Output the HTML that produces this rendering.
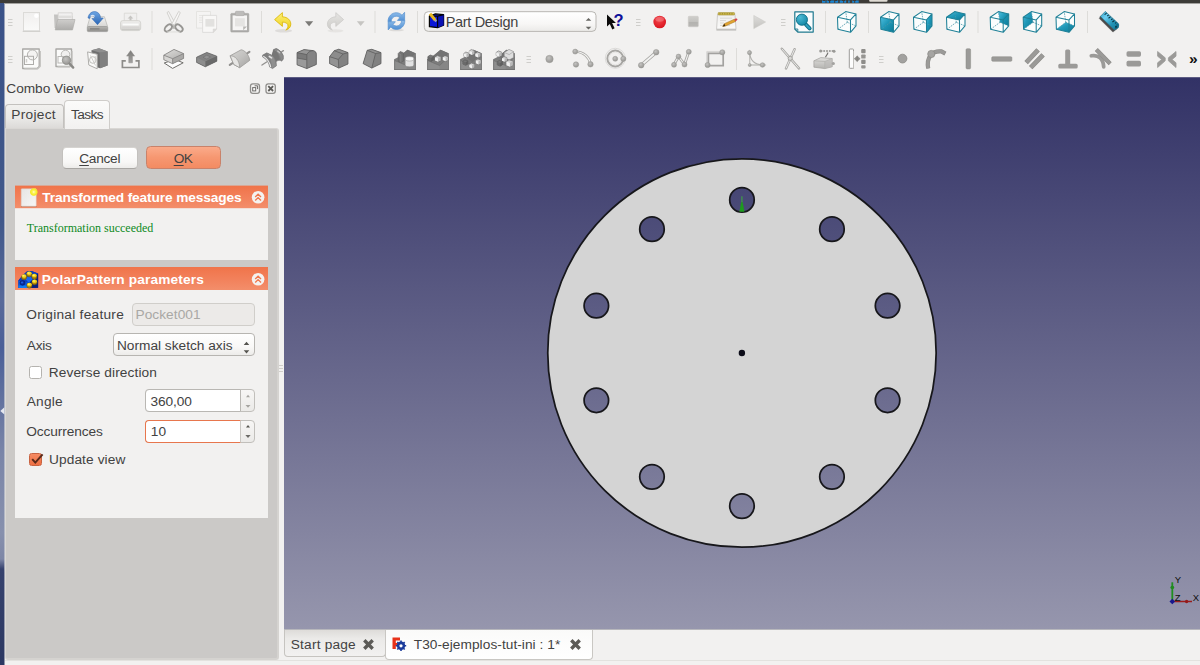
<!DOCTYPE html>
<html lang="en">
<head>
<meta charset="utf-8">
<title>FreeCAD - PolarPattern parameters</title>
<style>
html,body{margin:0;padding:0}
body{width:1200px;height:665px;position:relative;overflow:hidden;background:#f2f1f0;font-family:"Liberation Sans","DejaVu Sans",sans-serif;font-size:13.7px;color:#424242;line-height:16px}
.a{position:absolute}
.t{position:absolute;white-space:pre;line-height:16px;height:16px}
.b{font-weight:bold;color:#fff}
u{text-decoration:underline;text-decoration-thickness:1px;text-underline-offset:1.7px}
#topbar{left:0;top:0;width:1200px;height:3px;background:#3d3c38}
#topbar2{left:0;top:3px;width:1200px;height:1px;background:#a3a29f}
#leftstrip{left:0;top:3px;width:4px;height:662px;background:linear-gradient(#3a5288 0,#41588a 33%,#586a9a 45%,#4a5f98 52%,#62729f 60%,#7a85a8 68%,#8790ad 80%,#7d86a6 84%,#36426e 85.5%,#2c3862 100%)}
#leftstrip2{left:4px;top:4px;width:1px;height:661px;background:linear-gradient(#9aa3ba 0,#a0a8bc 40%,#b3b8c6 75%,#b0b4c2 84%,#9498ab 86%,#9196a8 100%)}
.grip i{position:absolute;left:0;width:5px;height:1px;background:#c9c8c5}
.sep{position:absolute;width:1px;background:#dcdbd8;height:22px}
</style>
</head>
<body>
<div class="a" id="topbar"></div><div class="a" id="topbar2"></div>
<div class="a" id="leftstrip"></div><div class="a" id="leftstrip2"></div>
<svg class="a" style="left:0;top:0" width="1200" height="4" viewBox="0 0 1200 4"><path d="M822 1.600h3.500m1 0h2.500m1.200 0h4m1 0h3m1.500 0h3.500m1 0h2m2 0h1.500m2.500 0h2m1 0h3.500" stroke="#1b86d4" stroke-width="2.400" fill="none"/><path d="M823 .4h2m3 0h3m4 0h2m5 0h3m8 0h3" stroke="#3b3a36" stroke-width="1" fill="none"/><rect x="869.200" y="-1" width="18.300" height="2.700" rx="1" fill="#dfdbd4"/></svg>
<svg class="a" style="left:0;top:405px" width="5" height="12" viewBox="0 0 5 12"><path d="M4.400 2.200v7.400L.3 5.900z" fill="#e4e7ef"/></svg>
<!-- ============ toolbars ============ -->
<svg class="a" style="left:0;top:0" width="1200" height="77" viewBox="0 0 1200 77">
<defs>
<linearGradient id="gPaper" x1="0" y1="0" x2="0" y2="1"><stop offset="0" stop-color="#f0efee"/><stop offset="1" stop-color="#fafaf9"/></linearGradient>
<linearGradient id="gFold" x1="0" y1="0" x2="0" y2="1"><stop offset="0" stop-color="#cfcecc"/><stop offset="1" stop-color="#adacaa"/></linearGradient>
<linearGradient id="gDrvTop" x1="0" y1="0" x2="0" y2="1"><stop offset="0" stop-color="#f4f4f3"/><stop offset="1" stop-color="#d7d6d4"/></linearGradient>
<linearGradient id="gDrvFront" x1="0" y1="0" x2="0" y2="1"><stop offset="0" stop-color="#b7b6b3"/><stop offset="1" stop-color="#8e8d8a"/></linearGradient>
<linearGradient id="gBlue" x1="0" y1="0" x2="0" y2="1"><stop offset="0" stop-color="#6ea6e4"/><stop offset="1" stop-color="#2a65b4"/></linearGradient>
<linearGradient id="gBlue2" x1="0" y1="0" x2="0" y2="1"><stop offset="0" stop-color="#8fbdea"/><stop offset="1" stop-color="#4b8cd2"/></linearGradient>
<linearGradient id="gPrn" x1="0" y1="0" x2="0" y2="1"><stop offset="0" stop-color="#efeeed"/><stop offset="1" stop-color="#d1d0cd"/></linearGradient>
<linearGradient id="gYel" x1="0" y1="0" x2="0" y2="1"><stop offset="0" stop-color="#fdf07a"/><stop offset="1" stop-color="#edcf14"/></linearGradient>
<linearGradient id="gGreyArrow" x1="0" y1="0" x2="0" y2="1"><stop offset="0" stop-color="#e6e5e3"/><stop offset="1" stop-color="#cccbc8"/></linearGradient>
<radialGradient id="gRed" cx=".45" cy=".35" r=".7"><stop offset="0" stop-color="#f4444a"/><stop offset="1" stop-color="#d8121c"/></radialGradient>
<linearGradient id="gStop" x1="0" y1="0" x2="0" y2="1"><stop offset="0" stop-color="#cfcecb"/><stop offset=".5" stop-color="#c3c2bf"/><stop offset=".52" stop-color="#b3b2af"/><stop offset="1" stop-color="#b9b8b5"/></linearGradient>
<linearGradient id="gPlay" x1="0" y1="0" x2="0" y2="1"><stop offset="0" stop-color="#dedddb"/><stop offset="1" stop-color="#c3c2bf"/></linearGradient>
<radialGradient id="gTealBall" cx=".35" cy=".3" r=".8"><stop offset="0" stop-color="#4cb9d4"/><stop offset="1" stop-color="#0f86a4"/></radialGradient>
<linearGradient id="gTeal" x1="0" y1="0" x2="1" y2="1"><stop offset="0" stop-color="#4fbfe0"/><stop offset=".45" stop-color="#1f98b8"/><stop offset="1" stop-color="#0c7a97"/></linearGradient>
<linearGradient id="gRuler" x1="0" y1="0" x2="1" y2="1"><stop offset="0" stop-color="#2a9cc0"/><stop offset=".3" stop-color="#6ccdf0"/><stop offset=".65" stop-color="#2294b6"/><stop offset="1" stop-color="#137a98"/></linearGradient>
<radialGradient id="gBall" cx=".4" cy=".35" r=".75"><stop offset="0" stop-color="#c4c3c1"/><stop offset="1" stop-color="#8f8e8b"/></radialGradient>
<linearGradient id="gArrowUp" x1="0" y1="0" x2="0" y2="1"><stop offset="0" stop-color="#7b7a77"/><stop offset="1" stop-color="#a3a2a0"/></linearGradient>
<linearGradient id="gPadTop" x1="0" y1="0" x2="1" y2="1"><stop offset="0" stop-color="#dddcda"/><stop offset="1" stop-color="#b2b1af"/></linearGradient>
<linearGradient id="gCyl" x1="0" y1="0" x2="1" y2="1"><stop offset="0" stop-color="#d6d5d3"/><stop offset=".5" stop-color="#c2c1bf"/><stop offset="1" stop-color="#a3a2a0"/></linearGradient>
<linearGradient id="gBox" x1="0" y1="0" x2="0" y2="1"><stop offset="0" stop-color="#e0dfdd"/><stop offset="1" stop-color="#b5b4b1"/></linearGradient>
<linearGradient id="gCombo" x1="0" y1="0" x2="0" y2="1"><stop offset="0" stop-color="#ffffff"/><stop offset=".6" stop-color="#f8f7f6"/><stop offset="1" stop-color="#ebeae8"/></linearGradient>
</defs>
<rect x="424.3" y="11.7" width="171.7" height="19.7" rx="4" fill="url(#gCombo)" stroke="#b9b7b3" stroke-width="1"/>
<g transform="translate(429 13.5)"><path d="M.4 2.6L6.5.4l8.1.8v10.6l-6 2.4-8.2-1z" fill="#0a16d8" stroke="#050505" stroke-width="1.2" stroke-linejoin="round"/><path d="M8.6 2.6l6-1.4v10.6l-6 2.4z" fill="#0b12b4"/><path d="M.4 2.6h8.2l6-1.4M8.6 2.6v11.6" fill="none" stroke="#050505" stroke-width="1.1"/><path d="M1 .2l5.3 6.6" stroke="#e6b61e" stroke-width="3" stroke-linecap="butt"/><path d="M6 6.3l1.3 1.7" stroke="#9aa0b4" stroke-width="2.2"/></g>
<path d="M585.7 20.8l2.8-2.7 2.8 2.7zM585.7 26.8l2.8 2.7 2.8-2.7z" fill="#666561"/>
<path d="M8 19.5h4.5M8 22.5h4.5M8 25.5h4.5" stroke="#cfcecb" stroke-width="1" fill="none"/>
<g transform="translate(23 12)"><rect x=".5" y=".5" width="16" height="18.3" fill="url(#gPaper)" stroke="#dcdbd8"/><circle cx="13.4" cy="3.8" r="2.3" fill="#fff" opacity=".95"/><path d="M-.3 19.4h17.6" stroke="#cfcecb" stroke-width="1"/></g>
<g transform="translate(53 12)"><path d="M1 2.6h4.6l1 1.4h12.9v12H1.6z" fill="#c4c3c1"/><path d="M5.2.8h14v13h-14z" fill="url(#gPaper)" stroke="#d2d1ce" stroke-width=".8"/><path d="M6 3.6h12.6v2.7H6z" fill="#dfdedc"/><path d="M2.2 17.9L4.7 7.5h17.3l-2.5 10.4z" fill="url(#gFold)" stroke="#b0afac" stroke-width=".7"/></g>
<g transform="translate(87 12)"><path d="M3.2 4.7h14.2l3.2 9.9H.3z" fill="url(#gDrvTop)" stroke="#bdbcb9" stroke-width=".8"/><rect x=".3" y="14.5" width="20.4" height="5.1" rx="1.2" fill="url(#gDrvFront)" stroke="#9a9996" stroke-width=".7"/><path d="M3 16.9h9.5" stroke="#7e7d7a" stroke-width="1.2"/><path d="M1 6C1.5 2.5 4-.4 7.3-.4c3.7 0 5.9 2.6 6.3 6.3l2.7.1-5.8 6.7-5.6-6.2 2.7-.1C7.4 4.6 6.6 3.6 5.4 3.6 4 3.6 3 4.8 2.8 6.4z" fill="url(#gBlue)" stroke="#3a6fb4" stroke-width=".6" stroke-linejoin="round"/><path d="M3.6 4.3c1.2-1.3 3-1.2 4 .2" fill="none" stroke="#fff" stroke-width="1.1" opacity=".75"/></g>
<g transform="translate(120 13)"><path d="M4.3.2h12.4v9h-12.4z" fill="#f0efee" stroke="#d8d7d4" stroke-width=".8"/><path d="M10.5 2.4l2.8 3h-1.8v3h-2V5.4H7.7z" fill="#c6c5c2"/><rect x=".5" y="7.6" width="20.2" height="10" rx="2.4" fill="url(#gPrn)" stroke="#d0cfcc" stroke-width=".8"/><path d="M2.5 11.5h16.2" stroke="#fbfbfa" stroke-width="2"/><path d="M2.2 14.3h16.8" stroke="#d6d5d2" stroke-width=".9"/><path d="M2 16.6h17.2" stroke="#c9c8c5" stroke-width="1"/></g>
<path d="M152 11v22" stroke="#dddcd9" stroke-width="1" fill="none"/>
<g transform="translate(164 11)"><path d="M4.6.4l6.8 12.4-2.6 1.4L3 1.6z" fill="#f4f3f2" stroke="#cbcac7" stroke-width=".8"/><path d="M14.7.4L7.9 12.8l2.6 1.4L16.3 1.6z" fill="#f7f6f5" stroke="#cbcac7" stroke-width=".8"/><ellipse cx="4.3" cy="17" rx="2.6" ry="4.3" transform="rotate(48 4.3 17)" fill="none" stroke="#979693" stroke-width="1.9"/><ellipse cx="15" cy="17" rx="2.6" ry="4.3" transform="rotate(-48 15 17)" fill="none" stroke="#979693" stroke-width="1.9"/><path d="M9.7 13.2l-1.5 4.5h3z" fill="#b5b4b1"/><ellipse cx="9.6" cy="20.9" rx="7" ry=".8" fill="#e0dfdd" opacity=".7"/></g>
<g transform="translate(196 11)"><path d="M.5.5h14v16.6H.5z" fill="#f5f4f3" stroke="#e1e0dd" stroke-width=".8"/><path d="M3 4.5h4M3 6.8h4M3 9.1h4M3 11.4h4" stroke="#e6e5e3" stroke-width="1"/><path d="M6.6 4.4h14v13.6l-3.4 3.4H6.6z" fill="#f8f7f6" stroke="#d9d8d5" stroke-width=".8"/><path d="M9.4 8h9v7.6h-9z" fill="#e2e1df"/><path d="M17.2 21.4v-3.4h3.4z" fill="#dddcda" stroke="#d2d1ce" stroke-width=".5"/></g>
<g transform="translate(230 11)"><rect x=".8" y="2.4" width="18" height="18.6" rx=".8" fill="#adacaa" stroke="#a3a2a0" stroke-width=".6"/><path d="M2.6 4.4h14.4v14.8H2.6z" fill="#f6f5f4"/><rect x="5.4" y=".3" width="8.8" height="4.3" rx="1" fill="#bdbcba" stroke="#a9a8a6" stroke-width=".6"/><path d="M5 7.2h9.8v8.2H5z" fill="#e5e4e2"/><path d="M13.2 19.2v-3.8h3.8z" fill="#b9b8b5"/></g>
<path d="M261.5 11v22" stroke="#dddcd9" stroke-width="1" fill="none"/>
<g transform="translate(274 12)"><ellipse cx="9.5" cy="18.8" rx="8.5" ry="1.7" fill="#d8d7d4" opacity=".8"/><path d="M.6 7.6L8.4.6v4.2c5.4.300 8.4 3.6 8.4 7.4 0 3-2.2 5.2-5 5.8 1.6-1.2 2.2-2.6 2.2-4 0-2.4-2-3.8-5.6-3.9v4.3z" fill="url(#gYel)" stroke="#d9b400" stroke-width=".8" stroke-linejoin="round"/></g>
<path d="M305 21.2h8.2l-4.1 5z" fill="#7b7a77"/>
<g transform="translate(327 12)"><ellipse cx="8.5" cy="18.8" rx="8" ry="1.6" fill="#e2e1de" opacity=".8"/><path d="M16.6 7.6L8.8.6v4.2C3.4 5.1.4 8.4.4 12.2c0 3 2.2 5.2 5 5.8-1.6-1.2-2.2-2.6-2.2-4 0-2.4 2-3.8 5.6-3.9v4.3z" fill="url(#gGreyArrow)" stroke="#cdccc9" stroke-width=".8" stroke-linejoin="round"/></g>
<path d="M356.8 21.2h7.8l-3.9 4.8z" fill="#c6c5c2"/>
<path d="M375 11v22" stroke="#dddcd9" stroke-width="1" fill="none"/>
<g transform="translate(387 11.5)"><ellipse cx="9.5" cy="18.6" rx="7.5" ry="1.2" fill="#d6d5d2" opacity=".8"/><g transform="translate(0 -.3) scale(1 1.1)"><path d="M1 9.6C1 4.6 4.8 1.4 9.2 1.4c2.4 0 4.3.8 5.8 2.3L17.6 1v7.4h-7.2l2.4-2.5C11.8 5 10.6 4.6 9.2 4.6 6.4 4.6 4.2 6.6 4.2 9.6z" fill="url(#gBlue2)" stroke="#5a93d0" stroke-width=".7" stroke-linejoin="round"/><path d="M17.8 8.4c0 5-3.8 8.2-8.2 8.2-2.4 0-4.3-.8-5.8-2.3L1.2 17V9.6h7.2L6 12.1c1 .9 2.2 1.3 3.6 1.3 2.8 0 5-2 5-5z" fill="url(#gBlue2)" stroke="#5a93d0" stroke-width=".7" stroke-linejoin="round"/></g></g>
<path d="M417.5 11v22" stroke="#dddcd9" stroke-width="1" fill="none"/>
<g transform="translate(606 14)"><path d="M1 .4l0 12.2 2.8-2.6 2.5 5.4 2.3-1.1-2.5-5.2 3.9-.2z" fill="#0b0b0b"/><text x="7.6" y="12.3" font-family="'Liberation Sans',sans-serif" font-weight="bold" font-size="16.5" fill="#10109a">?</text></g>
<path d="M636 19.5h4.5M636 22.5h4.5M636 25.5h4.5" stroke="#cfcecb" stroke-width="1" fill="none"/>
<g transform="translate(653 15.5)"><circle cx="6.7" cy="6.5" r="6.3" fill="url(#gRed)"/><ellipse cx="6.7" cy="3.8" rx="4.3" ry="2.5" fill="#fff" opacity=".22"/></g>
<g transform="translate(688 16)"><rect x=".3" y=".3" width="10" height="10.4" rx=".8" fill="url(#gStop)" stroke="#c9c8c5" stroke-width=".6"/></g>
<g transform="translate(716 12)"><path d="M1.5 2.5h17.5l1 14.6H.6z" fill="url(#gPaper)" stroke="#c4c3c0" stroke-width=".8"/><path d="M.4 17.1h19.8v1.5H.4z" fill="#bfbebb"/><rect x="2" y=".5" width="16.6" height="2.6" rx=".8" fill="#c9b64a" stroke="#a08c2c" stroke-width=".5"/><path d="M3.5 1.8h13.5" stroke="#8f7c25" stroke-width="1" stroke-dasharray="1 1.4"/><path d="M4 6.2h12M4 8.6h6M4 11h4M4 13.4h10" stroke="#d9d8d5" stroke-width="1"/><path d="M8.3 11.7L18.4 7.2l1.1 2.3-10.1 4.6-2.7.4z" fill="#e2a431" stroke="#9b6b14" stroke-width=".5"/><path d="M18.4 7.2l1.3-.6c.8-.3 1.7.3 1.8 1.1l-2 1.8z" fill="#d8424a"/><path d="M6.7 14.5l1.6-2.8 1.1 2.4z" fill="#3a2a12"/></g>
<g transform="translate(753 15)"><path d="M.8.5L12.6 7 .8 13.6z" fill="url(#gPlay)" stroke="#cccbc8" stroke-width=".6"/></g>
<path d="M781 19.5h4.5M781 22.5h4.5M781 25.5h4.5" stroke="#cfcecb" stroke-width="1" fill="none"/>
<g transform="translate(794 11)"><path d="M.8.8h18.4v20.3H3.8L.8 18z" fill="#f9fcfd" stroke="#207a8f" stroke-width="1.2" stroke-linejoin="round"/><path d="M.8 18h3v3" fill="none" stroke="#207a8f" stroke-width=".9"/><path d="M12 13.7l3.6 3.6" stroke="#0f6f88" stroke-width="4" stroke-linecap="round"/><path d="M12.2 13.9l3.3 3.3" stroke="#2fa3c0" stroke-width="2" stroke-linecap="round"/><circle cx="7.9" cy="8.7" r="5.6" fill="url(#gTealBall)" stroke="#0f6f88" stroke-width=".9"/></g>
<path d="M825.5 11v22" stroke="#dddcd9" stroke-width="1" fill="none"/>
<g transform="translate(837 11)"><path d="M0.5 6.3L8.7 0.6L19 2.9L19 14.9L13.5 21.3L0.9 18.3Z" fill="#fbfdfd"/><path d="M10.3 11.3L8.7 0.6M10.3 11.3L19 14.9M10.3 11.3L0.9 18.3" stroke="#4a98aa" stroke-width=".8" stroke-dasharray="1.6 .9" fill="none"/><path d="M0.5 6.3L13.5 8.9L13.5 21.3L0.9 18.3ZM0.5 6.3L8.7 0.6L19 2.9L13.5 8.9ZM13.5 8.9L19 2.9L19 14.9L13.5 21.3Z" fill="none" stroke="#1f8097" stroke-width="1.05" stroke-linejoin="round"/></g>
<path d="M868.5 11v22" stroke="#dddcd9" stroke-width="1" fill="none"/>
<g transform="translate(880 11)"><path d="M0.5 6.3L8.7 0.6L19 2.9L19 14.9L13.5 21.3L0.9 18.3Z" fill="#fbfdfd"/><path d="M0.5 6.3L13.5 8.9L13.5 21.3L0.9 18.3Z" fill="url(#gTeal)"/><path d="M10.3 11.3L8.7 0.6M10.3 11.3L19 14.9M10.3 11.3L0.9 18.3" stroke="#4a98aa" stroke-width=".8" stroke-dasharray="1.6 .9" fill="none"/><path d="M0.5 6.3L13.5 8.9L13.5 21.3L0.9 18.3ZM0.5 6.3L8.7 0.6L19 2.9L13.5 8.9ZM13.5 8.9L19 2.9L19 14.9L13.5 21.3Z" fill="none" stroke="#1f8097" stroke-width="1.05" stroke-linejoin="round"/></g>
<g transform="translate(913 11)"><path d="M0.5 6.3L8.7 0.6L19 2.9L19 14.9L13.5 21.3L0.9 18.3Z" fill="#fbfdfd"/><path d="M13.5 8.9L19 2.9L19 14.9L13.5 21.3Z" fill="url(#gTeal)"/><path d="M10.3 11.3L8.7 0.6M10.3 11.3L19 14.9M10.3 11.3L0.9 18.3" stroke="#4a98aa" stroke-width=".8" stroke-dasharray="1.6 .9" fill="none"/><path d="M0.5 6.3L13.5 8.9L13.5 21.3L0.9 18.3ZM0.5 6.3L8.7 0.6L19 2.9L13.5 8.9ZM13.5 8.9L19 2.9L19 14.9L13.5 21.3Z" fill="none" stroke="#1f8097" stroke-width="1.05" stroke-linejoin="round"/></g>
<g transform="translate(946 11)"><path d="M0.5 6.3L8.7 0.6L19 2.9L19 14.9L13.5 21.3L0.9 18.3Z" fill="#fbfdfd"/><path d="M0.5 6.3L8.7 0.6L19 2.9L13.5 8.9Z" fill="url(#gTeal)"/><path d="M10.3 11.3L8.7 0.6M10.3 11.3L19 14.9M10.3 11.3L0.9 18.3" stroke="#4a98aa" stroke-width=".8" stroke-dasharray="1.6 .9" fill="none"/><path d="M0.5 6.3L13.5 8.9L13.5 21.3L0.9 18.3ZM0.5 6.3L8.7 0.6L19 2.9L13.5 8.9ZM13.5 8.9L19 2.9L19 14.9L13.5 21.3Z" fill="none" stroke="#1f8097" stroke-width="1.05" stroke-linejoin="round"/></g>
<path d="M978 11v22" stroke="#dddcd9" stroke-width="1" fill="none"/>
<g transform="translate(989.7 11)"><path d="M0.5 6.3L8.7 0.6L19 2.9L19 14.9L13.5 21.3L0.9 18.3Z" fill="#fbfdfd"/><path d="M8.7 0.6L19 2.9L19 14.9L10.3 11.3Z" fill="url(#gTeal)"/><path d="M10.3 11.3L8.7 0.6M10.3 11.3L19 14.9M10.3 11.3L0.9 18.3" stroke="#4a98aa" stroke-width=".8" stroke-dasharray="1.6 .9" fill="none"/><path d="M0.5 6.3L13.5 8.9L13.5 21.3L0.9 18.3ZM0.5 6.3L8.7 0.6L19 2.9L13.5 8.9ZM13.5 8.9L19 2.9L19 14.9L13.5 21.3Z" fill="none" stroke="#1f8097" stroke-width="1.05" stroke-linejoin="round"/></g>
<g transform="translate(1022.7 11)"><path d="M0.5 6.3L8.7 0.6L19 2.9L19 14.9L13.5 21.3L0.9 18.3Z" fill="#fbfdfd"/><path d="M0.5 6.3L8.7 0.6L10.3 11.3L0.9 18.3Z" fill="url(#gTeal)"/><path d="M10.3 11.3L8.7 0.6M10.3 11.3L19 14.9M10.3 11.3L0.9 18.3" stroke="#4a98aa" stroke-width=".8" stroke-dasharray="1.6 .9" fill="none"/><path d="M0.5 6.3L13.5 8.9L13.5 21.3L0.9 18.3ZM0.5 6.3L8.7 0.6L19 2.9L13.5 8.9ZM13.5 8.9L19 2.9L19 14.9L13.5 21.3Z" fill="none" stroke="#1f8097" stroke-width="1.05" stroke-linejoin="round"/></g>
<g transform="translate(1055.5 11)"><path d="M0.5 6.3L8.7 0.6L19 2.9L19 14.9L13.5 21.3L0.9 18.3Z" fill="#fbfdfd"/><path d="M0.9 18.3L13.5 21.3L19 14.9L10.3 11.3Z" fill="url(#gTeal)"/><path d="M10.3 11.3L8.7 0.6M10.3 11.3L19 14.9M10.3 11.3L0.9 18.3" stroke="#4a98aa" stroke-width=".8" stroke-dasharray="1.6 .9" fill="none"/><path d="M0.5 6.3L13.5 8.9L13.5 21.3L0.9 18.3ZM0.5 6.3L8.7 0.6L19 2.9L13.5 8.9ZM13.5 8.9L19 2.9L19 14.9L13.5 21.3Z" fill="none" stroke="#1f8097" stroke-width="1.05" stroke-linejoin="round"/></g>
<path d="M1087.5 11v22" stroke="#dddcd9" stroke-width="1" fill="none"/>
<g transform="translate(1098 12)"><path d="M1.3 6.5l1.1-2.3 14 13.5 3-1.3-4.5 3.7z" fill="#4b4b4b" stroke="#5a5a5a" stroke-width=".5" stroke-linejoin="round"/><path d="M7.3-.6L20 11.2c.9.9.9 2.2.2 4.6l-3.9 2L2.4 4.4z" fill="url(#gRuler)" stroke="#12647e" stroke-width=".6" stroke-linejoin="round"/><path d="M16.3 17.8l1.5-5 2.2-1.6c.9.9.9 2.2.2 4.6z" fill="#0f6d8a"/><path d="M8.6 1.1l-2 1.5M10.6 3l-1.3 1M12.5 4.8l-2 1.5M14.5 6.7l-1.3 1M16.4 8.5l-2 1.5M18.4 10.4l-1.3 1" stroke="#0a3444" stroke-width="1.1"/><circle cx="18" cy="14.8" r=".9" fill="#083040"/></g>
<path d="M8 56.5h4.5M8 59.5h4.5M8 62.5h4.5" stroke="#cfcecb" stroke-width="1" fill="none"/>
<g transform="translate(21.2 48)"><path d="M1.5 1h16.5v17.5l-2 2H1.5z" fill="#fbfbfa" stroke="#a9a8a5" stroke-width="1.3" stroke-linejoin="round"/><path d="M3 20.9h13.5l2.7-2.7V3" fill="none" stroke="#c7c6c3" stroke-width="1.2"/><circle cx="11.2" cy="6.9" r="5" fill="#f4f3f2" stroke="#b3b2af" stroke-width="1"/><rect x="3.3" y="8.3" width="9" height="8.2" fill="none" stroke="#aeadaa" stroke-width="1"/><path d="M5.3 11v3.5" stroke="#d0cfcc" stroke-width="1.5"/></g>
<g transform="translate(55 48)"><path d="M1 1h15.5v15.5l-2 2H1z" fill="#fbfbfa" stroke="#a9a8a5" stroke-width="1.4" stroke-linejoin="round"/><path d="M2.5 18.8h12.2l2.4-2.4V3" fill="none" stroke="#c7c6c3" stroke-width="1.2"/><circle cx="10.5" cy="6.5" r="4.3" fill="#f1f0ef" stroke="#b9b8b5" stroke-width="1"/><rect x="3" y="8.5" width="6" height="6.5" fill="none" stroke="#b9b8b5" stroke-width="1"/><circle cx="11.5" cy="12.3" r="4.2" fill="url(#gBall)" stroke="#8c8b88" stroke-width=".8"/><path d="M14.6 15.6l3.6 4" stroke="#8a8986" stroke-width="2.4" stroke-linecap="round"/></g>
<g transform="translate(87 48)"><path d="M4.5 2.2l7.5-2 8.6 3.2v14l-7.6 2.8-8.5-2.6z" fill="#6f6f6f"/><path d="M12.5 4.3l8.1-.9v14l-7.6 2.8z" fill="#808080"/><path d="M4.5 2.2l7.5-2 8.6 3.2-8.1 1z" fill="#8f8f8f"/><path d="M.6 3.9l9.6 2.4v14.5L1.8 17z" fill="#fafaf9" stroke="#aeadaa" stroke-width="1" stroke-linejoin="round"/><circle cx="5.8" cy="12" r="3.3" fill="none" stroke="#bfbeba" stroke-width="1"/><path d="M3.5 7.5l5 10M8.2 8v6" stroke="#cfcecb" stroke-width="1"/></g>
<g transform="translate(121 51)"><path d="M4.8 9.8H1.4v6.7h16.5V9.8h-3.4" fill="none" stroke="#8d8c89" stroke-width="1.7"/><path d="M9.6-.4l4 5.5h-2.2v6.7H7.8V5.1H5.6z" fill="url(#gArrowUp)" stroke="#8a8986" stroke-width=".5"/></g>
<path d="M152 48v22" stroke="#dddcd9" stroke-width="1" fill="none"/>
<g transform="translate(163 49)"><path d="M1.2 14l10.6-3.6 8.4 3.4-10.6 5.6z" fill="#fdfdfd" stroke="#6f6e6b" stroke-width="1" stroke-linejoin="round"/><path d="M.8 6.2L11 .4l9.6 4.2v4.8L9.6 14.7.8 10.7z" fill="#b5b4b2"/><path d="M.8 6.2L11 .4l9.6 4.2L9.6 9.7z" fill="url(#gPadTop)"/><path d="M.8 6.2l8.8 3.5v5L.8 10.7z" fill="#d6d5d3"/><path d="M9.6 9.7l11-5.1v4.8l-11 5.3z" fill="#aaa9a7"/><path d="M.8 6.2L11 .4l9.6 4.2v4.8L9.6 14.7.8 10.7zM.8 6.2l8.8 3.5 11-5.1M9.6 9.7v5" fill="none" stroke="#838280" stroke-width=".8" stroke-linejoin="round"/></g>
<g transform="translate(196 52)"><path d="M.6 5.2L10.8.4l10 3.8v5L9.3 14.8.6 10.4z" fill="#777"/><path d="M.6 5.2L10.8.4l10 3.8L9.3 9.6z" fill="#838383"/><path d="M9.3 9.6l11.5-5.4v5L9.3 14.8z" fill="#6a6a6a"/><path d="M.6 5.2l8.7 4.4v5.2L.6 10.4z" fill="#8d8d8d"/><path d="M7 5.3l3.6-2 3.8 1.6-3.6 2.1z" fill="#939393" stroke="#6c6c6c" stroke-width=".5"/><path d="M.6 5.2L10.8.4l10 3.8v5L9.3 14.8.6 10.4z" fill="none" stroke="#636363" stroke-width=".7" stroke-linejoin="round"/></g>
<g transform="translate(229 50)"><path d="M.8 14.8L20.4 1.9" stroke="#939290" stroke-width="2.2" stroke-linecap="round"/><path d="M1.1 5.8L12.1-.2c3.5.4 7.6 4.5 8.7 10.5L10.7 17.7 4.8 14.5z" fill="url(#gCyl)" stroke="#9c9b98" stroke-width=".8" stroke-linejoin="round"/><path d="M1.1 5.8c4.9-.3 9.4 4.2 9.6 11.9L4.8 14.5z" fill="#e6e5e3" stroke="#9c9b98" stroke-width=".8" stroke-linejoin="round"/></g>
<g transform="translate(262 48.8)"><path d="M0 16.2L4.6 13.2M19.6 3L21.4 1.9" stroke="#939290" stroke-width="1.4" stroke-linecap="round"/><path d="M.6 6.3L4.8 4l5.1 2.5c.6-2 1.1-4 1.7-5.9l2.5-.8c2.9.7 5.9 3.7 7.2 7.1v3.4l-1.7 2.1c-1.6-1.4-3.6-.9-5.5.4l.4 4.2-3.9 2.8-2.9-1.5C7 14 4.5 10 .6 8.2z" fill="#7f7f7f"/><path d="M4.8 4l5.1 2.5c2.3 2.6 3.6 6 4.2 10.5l-3.8 2.8C9.8 13.5 8 8 4.8 4z" fill="#8f8f8f"/><path d="M9.9 6.5c.6-2 1.1-4 1.7-5.9 3.3 1.9 5.3 5.4 6 9.8-1.4.3-2.4 1.1-3.5 2.4-.7-2.6-2-4.6-4.2-6.3z" fill="#767676"/><path d="M11.6.6l2.5-.8c2.9.7 5.9 3.7 7.2 7.1v3.4l-1.7 2.1C18.6 7 15.8 2.8 11.6.6z" fill="#8a8a8a"/><path d="M1.3 7.5c3.7 2 6.3 6 7.4 11.2" fill="none" stroke="#ededed" stroke-width="1.3"/><path d="M7.3 7.7l2.3 1.4" stroke="#e2e2e2" stroke-width="1.6" stroke-linecap="round"/><path d="M15.6 2.2l2.2 1.9" stroke="#c9c9c9" stroke-width="1.1" stroke-linecap="round"/><path d="M.6 6.3L4.8 4l5.1 2.5c.6-2 1.1-4 1.7-5.9l2.5-.8c2.9.7 5.9 3.7 7.2 7.1v3.4l-1.7 2.1c-1.6-1.4-3.6-.9-5.5.4l.4 4.2-3.9 2.8-2.9-1.5C7 14 4.5 10 .6 8.2z" fill="none" stroke="#6c6c6c" stroke-width=".5"/></g>
<g transform="translate(296 49)"><path d="M1 3.6L8 .6 17 1.6c2.2.4 3.3 1.8 3.3 3.6v10.3L10.8 19.6 1 15.8z" fill="#7e7e7e"/><path d="M1 3.6L8 .6l9 1c-3.4.4-5.2 1.8-6.2 4z" fill="#959595"/><path d="M10.8 5.6c1-2.2 2.8-3.6 6.2-4 2.2.4 3.3 1.8 3.3 3.6v10.3l-9.5 4.1z" fill="#838383"/><path d="M1 3.6l9.8 2v5.2L1 9z" fill="#7a7a7a"/><path d="M1 9l9.8 1.8v8.8L1 15.8z" fill="#9a9a9a"/><path d="M1 9l9.8 1.8" fill="none" stroke="#606060" stroke-width=".8"/><path d="M1 3.6L8 .6 17 1.6c2.2.4 3.3 1.8 3.3 3.6v10.3L10.8 19.6 1 15.8zM1 3.6l9.8 2v14M10.8 5.6c1-2.2 2.8-3.6 6.2-4" fill="none" stroke="#5f5f5f" stroke-width=".8" stroke-linejoin="round"/></g>
<g transform="translate(329 49)"><path d="M5.2 1.7L9.8.2 19 3.6V15l-9.2 4.1L.6 14.6V7.7z" fill="#7e7e7e"/><path d="M5.2 1.7L9.8.2 19 3.6l-5 1.4z" fill="#8f8f8f"/><path d="M.6 7.7l4.6-6L14 5l-4.7 5.4z" fill="#8c8c8c"/><path d="M.6 7.7l8.7 2.7.5 8.7-9.2-4.5z" fill="#939393"/><path d="M9.3 10.4L14 5l5-1.4V15l-9.2 4.1z" fill="#828282"/><path d="M5.2 1.7L9.8.2 19 3.6V15l-9.2 4.1L.6 14.6V7.7zM.6 7.7l8.7 2.7.5 8.7M9.3 10.4L14 5l5-1.4M5.2 1.7L14 5" fill="none" stroke="#5f5f5f" stroke-width=".8" stroke-linejoin="round"/></g>
<g transform="translate(362 49)"><path d="M5.2 1.3L9.8.3 19 3.6v11l-9.2 4.5-8.7-4.5z" fill="#7e7e7e"/><path d="M5.2 1.3L9.8.3 19 3.6l-5.5.9z" fill="#909090"/><path d="M5.2 1.3l8.3 3.2-3.7 14.6-8.7-4.5z" fill="#8e8e8e"/><path d="M13.5 4.5l5.5-.9v11l-9.2 4.5z" fill="#818181"/><path d="M5.2 1.3L9.8.3 19 3.6v11l-9.2 4.5-8.7-4.5zM5.2 1.3l8.3 3.2-3.7 14.6M13.5 4.5l5.5-.9" fill="none" stroke="#5f5f5f" stroke-width=".8" stroke-linejoin="round"/></g>
<g transform="translate(394 49)"><path d="M.6 10L5.5 7.5 13.5.8l8 3.5V21H.6z" fill="#7c7c7c"/><path d="M5.5 7.5L13.5.8l8 3.5-9 9z" fill="#737373"/><path d="M.6 11.5l12 5 8.9-8.5V21H.6z" fill="#868686"/><path d="M.6 11.5l12 5V21H.6z" fill="#8e8e8e"/><path d="M.6 11.5l12 5 8.9-8.5M.6 20.5h21M.6 10v11M21.5 4.3V21" fill="none" stroke="#6d6d6d" stroke-width=".7"/><path d="M4.2 4.5l2-2 3.2 1.2v8.5l-2.8 1.3-2.4-1.2z" fill="#747474" stroke="#606060" stroke-width=".6" stroke-linejoin="round"/><path d="M4.2 4.5l2.6 1v8" fill="none" stroke="#8d8d8d" stroke-width=".7"/><path d="M11.2 10v5.6a4.3 2.2 0 0 0 8.6 0V10z" fill="#e2e2e2" stroke="#8a8a8a" stroke-width=".5"/><ellipse cx="15.5" cy="9.8" rx="4.3" ry="2.2" fill="#f6f6f6" stroke="#8a8a8a" stroke-width=".5"/></g>
<g transform="translate(427 49)"><path d="M.6 10L5.5 7.5 13.5.8l8 3.5V21H.6z" fill="#7c7c7c"/><path d="M5.5 7.5L13.5.8l8 3.5-9 9z" fill="#737373"/><path d="M.6 11.5l12 5 8.9-8.5V21H.6z" fill="#868686"/><path d="M.6 11.5l12 5V21H.6z" fill="#8e8e8e"/><path d="M.6 11.5l12 5 8.9-8.5M.6 20.5h21M.6 10v11M21.5 4.3V21" fill="none" stroke="#6d6d6d" stroke-width=".7"/><path d="M0.8999999999999999 7.6049999999999995L3.2199999999999998 6.01L6.699999999999999 7.17V10.94L4.09 12.389999999999999L0.8999999999999999 10.94Z" fill="#787878" stroke="#585858" stroke-width=".6" stroke-linejoin="round"/><path d="M0.8999999999999999 7.6049999999999995L4.09 8.91V12.389999999999999L0.8999999999999999 10.94Z" fill="#6a6a6a"/><path d="M4.09 8.91L6.699999999999999 7.17V10.94L4.09 12.389999999999999Z" fill="#606060"/><path d="M8 8.16L10.24 6.619999999999999L13.600000000000001 7.739999999999999V11.379999999999999L11.08 12.78L8 11.379999999999999Z" fill="#d2d2d2" stroke="#6a6a6a" stroke-width=".6" stroke-linejoin="round"/><path d="M8 8.16L11.08 9.42V12.78L8 11.379999999999999Z" fill="#f1f1f1"/><path d="M11.08 9.42L13.600000000000001 7.739999999999999V11.379999999999999L11.08 12.78Z" fill="#b9b9b9"/><path d="M15.799999999999999 8.07L17.88 6.64L21 7.68V11.06L18.66 12.36L15.799999999999999 11.06Z" fill="#d2d2d2" stroke="#6a6a6a" stroke-width=".6" stroke-linejoin="round"/><path d="M15.799999999999999 8.07L18.66 9.24V12.36L15.799999999999999 11.06Z" fill="#f1f1f1"/><path d="M18.66 9.24L21 7.68V11.06L18.66 12.36Z" fill="#b9b9b9"/></g>
<g transform="translate(460 49)"><path d="M.6 10L5.5 7.5 13.5.8l8 3.5V21H.6z" fill="#7c7c7c"/><path d="M5.5 7.5L13.5.8l8 3.5-9 9z" fill="#737373"/><path d="M.6 11.5l12 5 8.9-8.5V21H.6z" fill="#868686"/><path d="M.6 11.5l12 5V21H.6z" fill="#8e8e8e"/><path d="M.6 11.5l12 5 8.9-8.5M.6 20.5h21M.6 10v11M21.5 4.3V21" fill="none" stroke="#6d6d6d" stroke-width=".7"/><path d="M3.8 4.425L5.8 3.05L8.8 4.05V7.3L6.55 8.55L3.8 7.3Z" fill="#d2d2d2" stroke="#6a6a6a" stroke-width=".6" stroke-linejoin="round"/><path d="M3.8 4.425L6.55 5.55V8.55L3.8 7.3Z" fill="#f1f1f1"/><path d="M6.55 5.55L8.8 4.05V7.3L6.55 8.55Z" fill="#b9b9b9"/><path d="M9.3 1.9249999999999998L11.3 0.5499999999999998L14.3 1.5499999999999998V4.8L12.05 6.05L9.3 4.8Z" fill="#d2d2d2" stroke="#6a6a6a" stroke-width=".6" stroke-linejoin="round"/><path d="M9.3 1.9249999999999998L12.05 3.05V6.05L9.3 4.8Z" fill="#f1f1f1"/><path d="M12.05 3.05L14.3 1.5499999999999998V4.8L12.05 6.05Z" fill="#b9b9b9"/><path d="M15.3 4.425L17.3 3.05L20.3 4.05V7.3L18.05 8.55L15.3 7.3Z" fill="#d2d2d2" stroke="#6a6a6a" stroke-width=".6" stroke-linejoin="round"/><path d="M15.3 4.425L18.05 5.55V8.55L15.3 7.3Z" fill="#f1f1f1"/><path d="M18.05 5.55L20.3 4.05V7.3L18.05 8.55Z" fill="#b9b9b9"/><path d="M15.8 11.325L17.8 9.95L20.8 10.95V14.2L18.55 15.45L15.8 14.2Z" fill="#d2d2d2" stroke="#6a6a6a" stroke-width=".6" stroke-linejoin="round"/><path d="M15.8 11.325L18.55 12.45V15.45L15.8 14.2Z" fill="#f1f1f1"/><path d="M18.55 12.45L20.8 10.95V14.2L18.55 15.45Z" fill="#b9b9b9"/><path d="M9.3 15.425L11.3 14.05L14.3 15.05V18.3L12.05 19.55L9.3 18.3Z" fill="#d2d2d2" stroke="#6a6a6a" stroke-width=".6" stroke-linejoin="round"/><path d="M9.3 15.425L12.05 16.55V19.55L9.3 18.3Z" fill="#f1f1f1"/><path d="M12.05 16.55L14.3 15.05V18.3L12.05 19.55Z" fill="#b9b9b9"/><path d="M2.9000000000000004 12.225L4.9 10.85L7.9 11.85V15.1L5.65 16.35L2.9000000000000004 15.1Z" fill="#787878" stroke="#585858" stroke-width=".6" stroke-linejoin="round"/><path d="M2.9000000000000004 12.225L5.65 13.35V16.35L2.9000000000000004 15.1Z" fill="#6a6a6a"/><path d="M5.65 13.35L7.9 11.85V15.1L5.65 16.35Z" fill="#606060"/></g>
<g transform="translate(493 49)"><path d="M.6 10L5.5 7.5 13.5.8l8 3.5V21H.6z" fill="#7c7c7c"/><path d="M5.5 7.5L13.5.8l8 3.5-9 9z" fill="#737373"/><path d="M.6 11.5l12 5 8.9-8.5V21H.6z" fill="#868686"/><path d="M.6 11.5l12 5V21H.6z" fill="#8e8e8e"/><path d="M.6 11.5l12 5 8.9-8.5M.6 20.5h21M.6 10v11M21.5 4.3V21" fill="none" stroke="#6d6d6d" stroke-width=".7"/><path d="M3.2 3.415L5.36 1.9299999999999997L8.600000000000001 3.0100000000000007V6.5200000000000005L6.17 7.870000000000001L3.2 6.5200000000000005Z" fill="#d2d2d2" stroke="#6a6a6a" stroke-width=".6" stroke-linejoin="round"/><path d="M3.2 3.415L6.17 4.630000000000001V7.870000000000001L3.2 6.5200000000000005Z" fill="#f1f1f1"/><path d="M6.17 4.630000000000001L8.600000000000001 3.0100000000000007V6.5200000000000005L6.17 7.870000000000001Z" fill="#b9b9b9"/><path d="M11.2 3.4L16 .4l4.6 2.2v6L16.2 11l-5-2.4z" fill="#dedede" stroke="#858585" stroke-width=".6" stroke-linejoin="round"/><path d="M11.2 3.4l5 2.2 4.4-3" fill="none" stroke="#9a9a9a" stroke-width=".6"/><path d="M9 8.879999999999999L10.92 7.559999999999999L13.8 8.52V11.639999999999999L11.64 12.84L9 11.639999999999999Z" fill="#d2d2d2" stroke="#6a6a6a" stroke-width=".6" stroke-linejoin="round"/><path d="M9 8.879999999999999L11.64 9.959999999999999V12.84L9 11.639999999999999Z" fill="#f1f1f1"/><path d="M11.64 9.959999999999999L13.8 8.52V11.639999999999999L11.64 12.84Z" fill="#b9b9b9"/><path d="M13.400000000000002 12.540000000000001L15.96 10.780000000000001L19.8 12.06V16.22L16.92 17.82L13.400000000000002 16.22Z" fill="#d2d2d2" stroke="#6a6a6a" stroke-width=".6" stroke-linejoin="round"/><path d="M13.400000000000002 12.540000000000001L16.92 13.98V17.82L13.400000000000002 16.22Z" fill="#f1f1f1"/><path d="M16.92 13.98L19.8 12.06V16.22L16.92 17.82Z" fill="#b9b9b9"/><path d="M4.199999999999999 12.870000000000001L6.279999999999999 11.440000000000001L9.4 12.48V15.860000000000001L7.06 17.16L4.199999999999999 15.860000000000001Z" fill="#787878" stroke="#585858" stroke-width=".6" stroke-linejoin="round"/><path d="M4.199999999999999 12.870000000000001L7.06 14.040000000000001V17.16L4.199999999999999 15.860000000000001Z" fill="#6a6a6a"/><path d="M7.06 14.040000000000001L9.4 12.48V15.860000000000001L7.06 17.16Z" fill="#606060"/></g>
<path d="M526.5 56.5h4.5M526.5 59.5h4.5M526.5 62.5h4.5" stroke="#cfcecb" stroke-width="1" fill="none"/>
<g transform="translate(545 55)"><circle cx="4.5" cy="4" r="3.7" fill="url(#gBall)" stroke="#9b9a97" stroke-width=".5"/></g>
<g transform="translate(572 49)"><path d="M3.5 2.5c8.5.5 14 6 15 12.5" fill="none" stroke="#a6a5a2" stroke-width="2.6"/><path d="M3.5 2.5c8.5.5 14 6 15 12.5" fill="none" stroke="#f4f4f3" stroke-width="1.2"/><circle cx="3.2" cy="2.6" r="2.5" fill="url(#gBall)" stroke="#9b9a97" stroke-width=".5"/><circle cx="4" cy="15.5" r="2.7" fill="url(#gBall)" stroke="#9b9a97" stroke-width=".5"/><circle cx="18.5" cy="15.3" r="2.7" fill="url(#gBall)" stroke="#9b9a97" stroke-width=".5"/></g>
<g transform="translate(605 48)"><circle cx="10.3" cy="10.3" r="10" fill="none" stroke="#dbdad8" stroke-width="1"/><circle cx="10.3" cy="10.5" r="7.9" fill="none" stroke="#a7a6a3" stroke-width="2"/><circle cx="10.3" cy="10.5" r="6.3" fill="none" stroke="#e4e3e1" stroke-width=".9"/><circle cx="10.2" cy="10.8" r="2.5" fill="url(#gBall)" stroke="#9b9a97" stroke-width=".5"/><circle cx="18.3" cy="10.8" r="2.6" fill="url(#gBall)" stroke="#9b9a97" stroke-width=".5"/></g>
<g transform="translate(638 49)"><path d="M3.5 16L18 3.5" stroke="#a6a5a2" stroke-width="3.6" stroke-linecap="round"/><path d="M3.5 16L18 3.5" stroke="#f1f1f0" stroke-width="1.8"/><circle cx="3.2" cy="16.2" r="2.8" fill="url(#gBall)" stroke="#9b9a97" stroke-width=".5"/><circle cx="18.2" cy="3.2" r="2.8" fill="url(#gBall)" stroke="#9b9a97" stroke-width=".5"/></g>
<g transform="translate(671 49)"><path d="M3 15.5L7.5 7.5l6 8L17.8 2.8" fill="none" stroke="#a6a5a2" stroke-width="2.8" stroke-linejoin="round"/><path d="M3 15.5L7.5 7.5l6 8L17.8 2.8" fill="none" stroke="#efefee" stroke-width="1.1"/><circle cx="3" cy="15.8" r="2.5" fill="url(#gBall)" stroke="#9b9a97" stroke-width=".5"/><circle cx="7.5" cy="7.5" r="2.4" fill="url(#gBall)" stroke="#9b9a97" stroke-width=".5"/><circle cx="13.5" cy="15.5" r="2.5" fill="url(#gBall)" stroke="#9b9a97" stroke-width=".5"/><circle cx="17.8" cy="2.8" r="2.5" fill="url(#gBall)" stroke="#9b9a97" stroke-width=".5"/></g>
<g transform="translate(704 49)"><path d="M2.8 2.6h14.8" stroke="#d9d8d6" stroke-width="1.3"/><path d="M2.8 2.6v12.5" stroke="#d9d8d6" stroke-width="1.3"/><path d="M4.4 4.4h14.8v12.3H4.4z" fill="none" stroke="#a3a2a0" stroke-width="1.7"/><circle cx="3.6" cy="16" r="2.6" fill="url(#gBall)" stroke="#9b9a97" stroke-width=".5"/><circle cx="18.3" cy="3.3" r="2.6" fill="url(#gBall)" stroke="#9b9a97" stroke-width=".5"/></g>
<path d="M736.5 48v22" stroke="#dddcd9" stroke-width="1" fill="none"/>
<g transform="translate(746 49)"><path d="M3.7 2.5V16h16" fill="none" stroke="#c4c3c0" stroke-width="1.3"/><path d="M3.7 4c.5 7 5 11.5 13 12" fill="none" stroke="#b1b0ad" stroke-width="1.2"/><path d="M3.7 .5l-1.6 3h3.2zM20.5 16l-3-1.6v3.2z" fill="#cfcecb"/><circle cx="3.5" cy="3.7" r="2.1" fill="url(#gBall)" stroke="#9b9a97" stroke-width=".5"/><circle cx="16.5" cy="16" r="2.3" fill="url(#gBall)" stroke="#9b9a97" stroke-width=".5"/><circle cx="3.7" cy="16" r="1.5" fill="url(#gBall)" stroke="#9b9a97" stroke-width=".5"/></g>
<g transform="translate(780 48)"><path d="M1.8.8L19 20.4M14.6 1.2L6 20.4" stroke="#a9a8a5" stroke-width="2.5" stroke-linecap="round"/><path d="M1.8.8L19 20.4M14.6 1.2L6 20.4" stroke="#f0f0ef" stroke-width=".9"/><circle cx="10.2" cy="10.3" r="2.1" fill="#d8d7d5" stroke="#969592" stroke-width=".8"/></g>
<g transform="translate(813 49)"><path d="M7.5 2h13.5" stroke="#8c8b88" stroke-width="1.3" stroke-dasharray="1.8 1"/><circle cx="7.7" cy="2" r="1.5" fill="#9a9996"/><circle cx="21" cy="2.3" r="1.5" fill="#9a9996"/><path d="M12.4 8.3l2.3-3.8" stroke="#6e6d6a" stroke-width="1.2"/><path d="M13.6 3.8l1.7-.3-.3 2z" fill="#6e6d6a"/><path d="M.9 11.8l6.9-3.2 11.4.9v8.3l-7.3 1.8-11-1.4z" fill="url(#gBox)" stroke="#a09f9c" stroke-width=".7" stroke-linejoin="round"/><path d="M.9 11.8l11 .7 7.3-3M11.9 12.5v7" fill="none" stroke="#b0afac" stroke-width=".7"/><path d="M11.9 12.5l7.3-3v8.3l-7.3 1.8z" fill="#b9b8b5" opacity=".6"/><circle cx="20.3" cy="14.5" r="1.6" fill="#a3a2a0"/></g>
<g transform="translate(848 48)"><rect x="1.3" y="1" width="4.2" height="19.3" rx=".8" fill="#fdfdfd" stroke="#9d9c99" stroke-width="1"/><path d="M5.5 3v18" stroke="#c1c0bd" stroke-width="1"/><path d="M6.2 10.7l3-2.8v5.6zM12.2 10.7l-3-2.8v5.6z" fill="#8c8b88" stroke="#7a7976" stroke-width=".4"/><rect x="13.2" y="1" width="4.4" height="4.2" rx=".9" fill="#8e8d8a"/><rect x="13.2" y="6.4" width="4.4" height="4.2" rx=".9" fill="#969592"/><rect x="13.2" y="11.8" width="4.4" height="4.2" rx=".9" fill="#8e8d8a"/><rect x="13.2" y="17.2" width="4.4" height="3.2" rx=".9" fill="#969592"/></g>
<path d="M879 56.5h4.5M879 59.5h4.5M879 62.5h4.5" stroke="#cfcecb" stroke-width="1" fill="none"/>
<circle cx="902.5" cy="58.6" r="4.4" fill="#a2a19f" stroke="#8b8a87" stroke-width=".8"/>
<g transform="translate(925 49)"><path d="M3.2 19.4c-1.2-6.5 0-10 2.2-13 2.3-3 6.5-4.4 11-4l4 2.2" fill="none" stroke="#8d8c89" stroke-width="4.2" stroke-linecap="butt" stroke-linejoin="round"/><path d="M3.2 19.4c-1.2-6.5 0-10 2.2-13 2.3-3 6.5-4.4 11-4l3.6 2" fill="none" stroke="#9b9a98" stroke-width="3" stroke-linecap="butt"/><circle cx="6.3" cy="5" r="3.6" fill="#a5a4a2" stroke="#8b8a87" stroke-width=".8"/></g>
<rect x="966" y="48.7" width="4.6" height="20.2" rx="1.1" fill="#9b9a98" stroke="#8b8a87" stroke-width=".5"/>
<rect x="991.7" y="56.7" width="20.2" height="4.6" rx="1.1" fill="#9b9a98" stroke="#8b8a87" stroke-width=".5"/>
<g transform="translate(1024 48)"><path d="M2.1 14.6L14.1 1.8M6.7 19.7L19.1 6.8" stroke="#8d8c89" stroke-width="4.8" stroke-linecap="butt"/><path d="M2.3 14.4L13.9 2M6.9 19.5L18.9 7" stroke="#9b9a98" stroke-width="3.6" stroke-linecap="butt"/></g>
<g transform="translate(1058 49)"><rect x="7.2" y=".4" width="5" height="16" rx="1.5" fill="#9b9a98"/><rect x=".3" y="14.8" width="19.4" height="4.7" rx="1.6" fill="#9b9a98"/></g>
<g transform="translate(1090 48)"><path d="M1.3 7.8c7.5-1.3 12 3 12.4 11" fill="none" stroke="#9b9a98" stroke-width="3.7" stroke-linecap="round"/><path d="M6.3 1.5l13.9 14.2" stroke="#8d8c89" stroke-width="4.2" stroke-linecap="butt"/><path d="M6.6 1.8l13.3 13.6" stroke="#9b9a98" stroke-width="3.2" stroke-linecap="butt"/></g>
<rect x="1126.5" y="51.2" width="14.5" height="5.6" rx="1.7" fill="#9b9a98"/><rect x="1126.5" y="60.8" width="14.5" height="5.6" rx="1.7" fill="#9b9a98"/>
<g transform="translate(1157 51)"><path d="M.6.5L8.2 6.8v3L.6 16.5v-4.7l4-3.3-4-3.3zM19 .5l-7.6 6.3v3L19 16.5v-4.7l-4-3.3 4-3.3z" fill="#9b9a98" stroke="#9b9a98" stroke-width=".8" stroke-linejoin="round"/></g>
<text x="1189" y="63.5" font-family="'Liberation Sans',sans-serif" font-weight="bold" font-size="15.5" fill="#111">»</text>
</svg>
<div class="t" style="left:445.75px;top:14px;font-size:14.5px;letter-spacing:-0.33px">Part Design</div>
<!-- ============ Combo View dock ============ -->
<style>
.tab{position:absolute;box-sizing:border-box;border:1px solid #c3c1be;border-bottom:none;border-radius:4px 4px 0 0}
#tab-project{left:5px;top:104px;width:59px;height:24px;background:linear-gradient(#f1f0ee,#e9e8e6 60%,#dcdad8)}
#tab-tasks{left:64px;top:100px;width:46px;height:29px;background:linear-gradient(#fbfbfa,#f2f1f0);border-color:#cfcdca}
#pane{left:5px;top:128px;width:274px;height:532px;box-sizing:border-box;background:#cbc9c7;border:1px solid #d9d7d4;border-right:2px solid #d5d3d0;border-bottom:2px solid #d5d3d0;border-radius:0 3px 3px 3px}
.btn{position:absolute;box-sizing:border-box;border-radius:4.5px;height:22px;top:147px}
#btn-cancel{left:62px;width:75.5px;background:linear-gradient(#ffffff,#f8f7f6 70%,#edecea);border:1px solid #c3c1be;border-top-color:#d6d4d1;border-bottom-color:#a9a7a4}
#btn-ok{left:145.5px;width:75.5px;top:146px;height:23px;background:linear-gradient(#fbab8a,#f69771 50%,#f38b62);border:1px solid #c9826a}
.hdr{position:absolute;left:15px;width:253px;height:23px;background:linear-gradient(#f0744a,#f2805a 50%,#f38e6b)}
.body{position:absolute;left:15px;width:253px;background:#f2f1f0}
.fold{position:absolute;left:236px;top:5px;width:15px;height:15px}
.inp{position:absolute;box-sizing:border-box;border-radius:4px}
.chk{position:absolute;box-sizing:border-box;width:13px;height:13px;border-radius:2.5px}
</style>
<div class="t" style="left:6.3px;top:81px;letter-spacing:-0.03px">Combo View</div>
<svg class="a" style="left:248px;top:81px" width="30" height="15" viewBox="248 81 30 15">
  <rect x="250.5" y="83.8" width="9" height="9.5" rx="2.3" fill="#f4f3f2" stroke="#8f8e8b" stroke-width="1.3"/>
  <path d="M254.6 85.8h3v3.3" fill="none" stroke="#6d6c69" stroke-width="1"/><rect x="252.7" y="87.6" width="3" height="3.3" fill="#fbfbfa" stroke="#6d6c69" stroke-width="1"/>
  <rect x="266" y="83.8" width="9.3" height="9.5" rx="2.3" fill="#f4f3f2" stroke="#8f8e8b" stroke-width="1.3"/>
  <path d="M268.3 86.2l4.8 4.8M273.1 86.2l-4.8 4.8" stroke="#5b5a56" stroke-width="1.8" fill="none"/>
</svg>

<div class="tab" id="tab-project"></div>
<div class="a" id="pane"></div>
<div class="tab" id="tab-tasks"></div>
<div class="t" style="left:11.25px;top:107px;letter-spacing:0.29px">Project</div>
<div class="t" style="left:71px;top:107px;letter-spacing:-0.62px">Tasks</div>

<div class="btn" id="btn-cancel"></div>
<div class="btn" id="btn-ok"></div>
<div class="t" style="left:79.25px;top:151px;letter-spacing:-0.29px"><u>C</u>ancel</div>
<div class="t" style="left:173.7px;top:151px;letter-spacing:-0.7px"><u>O</u>K</div>

<!-- group 1 -->
<div class="hdr" style="top:185px;height:24px;background:linear-gradient(#daa795 0,#daa795 1px,#f0744a 1px,#f2805a 12px,#f38e6b 23px,#f2ddd5 23px)">
  <svg class="a" style="left:4px;top:1px" width="24" height="22" viewBox="0 0 24 22"><defs><radialGradient id="gGlow"><stop offset="0" stop-color="#fffef0"/><stop offset=".25" stop-color="#fdf66a"/><stop offset=".75" stop-color="#f6ea20"/><stop offset="1" stop-color="#f6e71e" stop-opacity="0"/></radialGradient><linearGradient id="gPg" x1="0" y1="0" x2="1" y2="1"><stop offset="0" stop-color="#e6e5e4"/><stop offset="1" stop-color="#f7f6f5"/></linearGradient></defs><path d="M2 20.6h15.4" stroke="#a86a50" stroke-width="1" opacity=".8"/><rect x="2.2" y="2.8" width="15" height="17.4" rx=".6" fill="url(#gPg)" stroke="#d9c9c0" stroke-width=".5"/><circle cx="14.8" cy="6" r="4.3" fill="url(#gGlow)"/></svg>
  <svg class="fold" viewBox="0 0 15 15"><circle cx="7.100" cy="7.300" r="6.300" fill="#f4f2f0"/><path d="M4.200 7L7.100 4.200L10 7M4.200 10.400L7.100 7.600L10 10.400" fill="none" stroke="#f0774d" stroke-width="1.400"/></svg>
</div>
<div class="t b" style="left:42.25px;top:190px;letter-spacing:-0.11px">Transformed feature messages</div>
<div class="body" style="top:209px;height:51px"></div>
<div class="t" style="left:26.8px;top:220px;font-family:'Liberation Serif','DejaVu Serif',serif;font-size:12px;color:#0d8a1c;letter-spacing:0px">Transformation succeeded</div>

<!-- group 2 -->
<div class="hdr" style="top:267px">
  <svg class="a" style="left:3px;top:1px" width="22" height="22" viewBox="0 0 22 22"><path d="M.4 20.1V12.4L4.3 7.8 8.9 3.5 13.5 2.9 20.1 5.5V19.8Z" fill="#0a2a9a"/><path d="M.4 12.4L4.3 7.8 8.9 3.5 13.5 2.9 20.1 5.5 12 14.5Z" fill="#0b3fc4"/><path d="M6.5 10l5.5-2 3 3.5-4.5 3z" fill="#1a66ee"/><path d="M.4 12.4L12 14.5V20L.4 20.1Z" fill="#0a55d8"/><path d="M.4 17.5h11.6V20L.4 20.1Z" fill="#0f7af4"/><path d="M12 14.5l8.1-9V19.8L12 20z" fill="#081f80"/><ellipse cx="4.5" cy="14.9" rx="2.5" ry="2.3" fill="#0a2a9c" stroke="#061a6a" stroke-width=".6"/><ellipse cx="4.1" cy="14.4" rx="1.2" ry="1" fill="#1b5fe0"/><ellipse cx="6.05" cy="9.2" rx="2.6" ry="2.5" fill="#b58a08" stroke="#6e5406" stroke-width=".6"/><ellipse cx="6.05" cy="8.1" rx="2.4" ry="1.8" fill="#f0d21c"/><ellipse cx="5.55" cy="7.8" rx="1.1" ry=".7" fill="#fdf07a"/><ellipse cx="11.2" cy="6.35" rx="2.6" ry="2.5" fill="#b58a08" stroke="#6e5406" stroke-width=".6"/><ellipse cx="11.2" cy="5.25" rx="2.4" ry="1.8" fill="#f0d21c"/><ellipse cx="10.7" cy="4.95" rx="1.1" ry=".7" fill="#fdf07a"/><ellipse cx="16.3" cy="8.65" rx="2.6" ry="2.5" fill="#b58a08" stroke="#6e5406" stroke-width=".6"/><ellipse cx="16.3" cy="7.550000000000001" rx="2.4" ry="1.8" fill="#f0d21c"/><ellipse cx="15.8" cy="7.250000000000001" rx="1.1" ry=".7" fill="#fdf07a"/><ellipse cx="16.5" cy="14.299999999999999" rx="2.6" ry="2.5" fill="#b58a08" stroke="#6e5406" stroke-width=".6"/><ellipse cx="16.5" cy="13.2" rx="2.4" ry="1.8" fill="#f0d21c"/><ellipse cx="16" cy="12.899999999999999" rx="1.1" ry=".7" fill="#fdf07a"/><ellipse cx="11.4" cy="17.6" rx="2.6" ry="2.5" fill="#b58a08" stroke="#6e5406" stroke-width=".6"/><ellipse cx="11.4" cy="16.5" rx="2.4" ry="1.8" fill="#f0d21c"/><ellipse cx="10.9" cy="16.2" rx="1.1" ry=".7" fill="#fdf07a"/></svg>
  <svg class="fold" viewBox="0 0 15 15"><circle cx="7.100" cy="7.300" r="6.300" fill="#f4f2f0"/><path d="M4.200 7L7.100 4.200L10 7M4.200 10.400L7.100 7.600L10 10.400" fill="none" stroke="#f0774d" stroke-width="1.400"/></svg>
</div>
<div class="t b" style="left:41.8px;top:272px;letter-spacing:0.14px">PolarPattern parameters</div>
<div class="body" style="top:290px;height:228px"></div>

<div class="t" style="left:26.3px;top:307px;letter-spacing:0.26px">Original feature</div>
<div class="inp" style="left:132px;top:303px;width:123px;height:23px;background:#eceae8;border:1px solid #d0ceca"></div>
<div class="t" style="left:135.45px;top:307px;letter-spacing:0.06px;color:#a9a8a5">Pocket001</div>

<div class="t" style="left:26.8px;top:338px;letter-spacing:-0.24px">Axis</div>
<div class="inp" style="left:113px;top:333px;width:142px;height:23px;background:linear-gradient(#ffffff,#f9f8f7 60%,#edecea);border:1px solid #b7b5b1"></div>
<div class="t" style="left:116.95px;top:338px;letter-spacing:-0px">Normal sketch axis</div>
<svg class="a" style="left:241px;top:337px" width="12" height="18" viewBox="0 0 12 18"><path d="M2.700 8L5.500 4.800L8.300 8Z M2.700 13.200L5.500 16.400L8.300 13.200Z" fill="#55544f"/></svg>

<div class="chk" style="left:29px;top:366px;background:#fff;border:1px solid #b5b3af"></div>
<div class="t" style="left:48.75px;top:365px;letter-spacing:0.1px">Reverse direction</div>

<div class="t" style="left:26.8px;top:394px;letter-spacing:0.19px">Angle</div>
<div class="inp" style="left:145px;top:389px;width:110px;height:23px;background:linear-gradient(#f7f6f5,#ebeae8);border:1px solid #c1bfbb"></div>
<div class="inp" style="left:145px;top:389px;width:96px;height:23px;background:#fff;border:1px solid #b9b7b3;border-radius:4px 0 0 4px"></div>
<div class="t" style="left:150.5px;top:394px;letter-spacing:-0.1px">360,00</div>
<svg class="a" style="left:243px;top:391px" width="10" height="20" viewBox="0 0 10 20"><path d="M3 6.300L5 3.800L7 6.300Z M2.500 14L5 16.800L7.500 14Z" fill="#a5a4a0"/></svg>

<div class="t" style="left:26.3px;top:424px;letter-spacing:-0.1px">Occurrences</div>
<div class="inp" style="left:145px;top:420px;width:110px;height:23px;background:linear-gradient(#f7f6f5,#ebeae8);border:1px solid #c1bfbb"></div>
<div class="inp" style="left:145px;top:420px;width:96px;height:23px;background:#fff;border:1.3px solid #e7764d;border-right:1px solid #c9c7c3;border-radius:4px 0 0 4px"></div>
<div class="t" style="left:150.8px;top:424px;letter-spacing:0.1px">10</div>
<svg class="a" style="left:243px;top:422px" width="10" height="20" viewBox="0 0 10 20"><path d="M3 5.600L5 3.100L7 5.600Z" fill="#55544f"/><path d="M2.400 13.100L5 16L7.600 13.100Z" fill="#6b6a66"/></svg>

<div class="chk" style="left:29px;top:453px;background:linear-gradient(#f58b63,#ee6f43);border:1px solid #c96341"></div>
<svg class="a" style="left:29px;top:451px" width="16" height="16" viewBox="0 0 16 16"><path d="M3.2 8.2L6.3 11.6L13.6 3.4" fill="none" stroke="#5a2a1a" stroke-width="2"/></svg>
<div class="t" style="left:49px;top:452px;letter-spacing:0.1px">Update view</div>

<!-- splitter grip -->
<div class="a" style="left:279px;top:365px;width:4px;height:1px;background:#d0ceca"></div>
<div class="a" style="left:279px;top:368px;width:4px;height:1px;background:#d0ceca"></div>
<div class="a" style="left:279px;top:371px;width:4px;height:1px;background:#d0ceca"></div>
<!-- ============ 3D view ============ -->
<div class="a" style="left:284px;top:77px;width:916px;height:1px;background:#5c5c83"></div>
<div class="a" id="view" style="left:284px;top:78px;width:916px;height:551px;background:linear-gradient(#323266,#9696ad)">
<svg class="a" style="left:0;top:0" width="916" height="551" viewBox="284 78 916 551">
  <path fill="#d4d4d4" fill-rule="evenodd" stroke="#17171b" stroke-width="1.75" d="M547.75 353.0a194.2 194.2 0 1 0 388.4 0a194.2 194.2 0 1 0 -388.4 0Z
   M729.70 199.90a12.25 12.25 0 1 0 24.5 0a12.25 12.25 0 1 0 -24.5 0Z
   M819.69 229.14a12.25 12.25 0 1 0 24.5 0a12.25 12.25 0 1 0 -24.5 0Z
   M875.31 305.69a12.25 12.25 0 1 0 24.5 0a12.25 12.25 0 1 0 -24.5 0Z
   M875.31 400.31a12.25 12.25 0 1 0 24.5 0a12.25 12.25 0 1 0 -24.5 0Z
   M819.69 476.86a12.25 12.25 0 1 0 24.5 0a12.25 12.25 0 1 0 -24.5 0Z
   M729.70 506.10a12.25 12.25 0 1 0 24.5 0a12.25 12.25 0 1 0 -24.5 0Z
   M639.71 476.86a12.25 12.25 0 1 0 24.5 0a12.25 12.25 0 1 0 -24.5 0Z
   M584.09 400.31a12.25 12.25 0 1 0 24.5 0a12.25 12.25 0 1 0 -24.5 0Z
   M584.09 305.69a12.25 12.25 0 1 0 24.5 0a12.25 12.25 0 1 0 -24.5 0Z
   M639.71 229.14a12.25 12.25 0 1 0 24.5 0a12.25 12.25 0 1 0 -24.5 0Z"/>
  <circle cx="741.9" cy="353" r="3.2" fill="#0c0c18"/>
  <path d="M741.9 202.500V196.300" stroke="#3f9a4a" stroke-width="1.600" opacity=".8"/>
  <path d="M741.100 202.300h1.600l1.700 9.400h-5z" fill="#1e9a1e"/>
  <!-- axis cross -->
  <g font-family="'Liberation Sans',sans-serif" font-size="9.5" fill="#0e0e0e">
    <path d="M1172.300 600V582.300" stroke="#1f8f1f" stroke-width="1.800"/><ellipse cx="1172.300" cy="587.400" rx="1.900" ry="1.600" fill="#1f8a1f"/>
    <path d="M1174 601.500H1192" stroke="#9a1c1c" stroke-width="1.500"/><ellipse cx="1186.600" cy="601.500" rx="1.600" ry="1.700" fill="#941a1a"/>
    <path d="M1172.300 598.800l2.800 2.700-2.800 2.700-2.800-2.700z" fill="#17178e"/>
    <text x="1174.700" y="583">Y</text><text x="1174.800" y="600.800">Z</text><text x="1192.800" y="601.300">X</text>
  </g>
</svg>
</div>
<!-- ============ MDI tabs + status ============ -->
<style>
.mtab{position:absolute;box-sizing:border-box;border:1px solid #c6c4c0;border-top:none;border-radius:0 0 4px 4px}
</style>
<div class="mtab" style="left:284px;top:629px;width:102px;height:28px;background:linear-gradient(#dcdad7,#ebeae8 35%,#f2f1f0)"></div>
<div class="mtab" style="left:385px;top:629px;width:208px;height:31px;background:linear-gradient(#fafaf9,#ffffff);border-color:#c9c7c3"></div>
<div class="t" style="left:290.75px;top:637px;letter-spacing:0.2px">Start page</div>
<svg class="a" style="left:362px;top:638px" width="13" height="13" viewBox="0 0 13 13"><path d="M2.300 2.300L10.700 10.700M10.700 2.300L2.300 10.700" stroke="#5c5b57" stroke-width="3.400" fill="none"/></svg>
<svg class="a" style="left:391px;top:636px" width="16" height="16" viewBox="0 0 16 16"><path d="M1.5 1.5H9V4.5H4.8V7H8V9.5H4.8V13H1.5Z" fill="#e8321a"/><circle cx="10" cy="9.8" r="4.2" fill="#1c3c9c"/><circle cx="10" cy="9.8" r="1.7" fill="#fff"/><path d="M10 4.6V15M4.8 9.8H15.2M6.3 6.1L13.7 13.5M13.7 6.1L6.3 13.5" stroke="#1c3c9c" stroke-width="1.6"/><circle cx="10" cy="9.8" r="1.6" fill="#fff"/></svg>
<div class="t" style="left:413.75px;top:637px;letter-spacing:0.05px">T30-ejemplos-tut-ini : 1*</div>
<svg class="a" style="left:569px;top:638px" width="13" height="13" viewBox="0 0 13 13"><path d="M2.300 2.300L10.700 10.700M10.700 2.300L2.300 10.700" stroke="#5c5b57" stroke-width="3.400" fill="none"/></svg>
<div class="a" style="left:284px;top:629px;width:916px;height:1px;background:#b7b7bc"></div>
<div class="a" style="left:5px;top:660px;width:1195px;height:1px;background:#e3e2df"></div>
</body>
</html>
